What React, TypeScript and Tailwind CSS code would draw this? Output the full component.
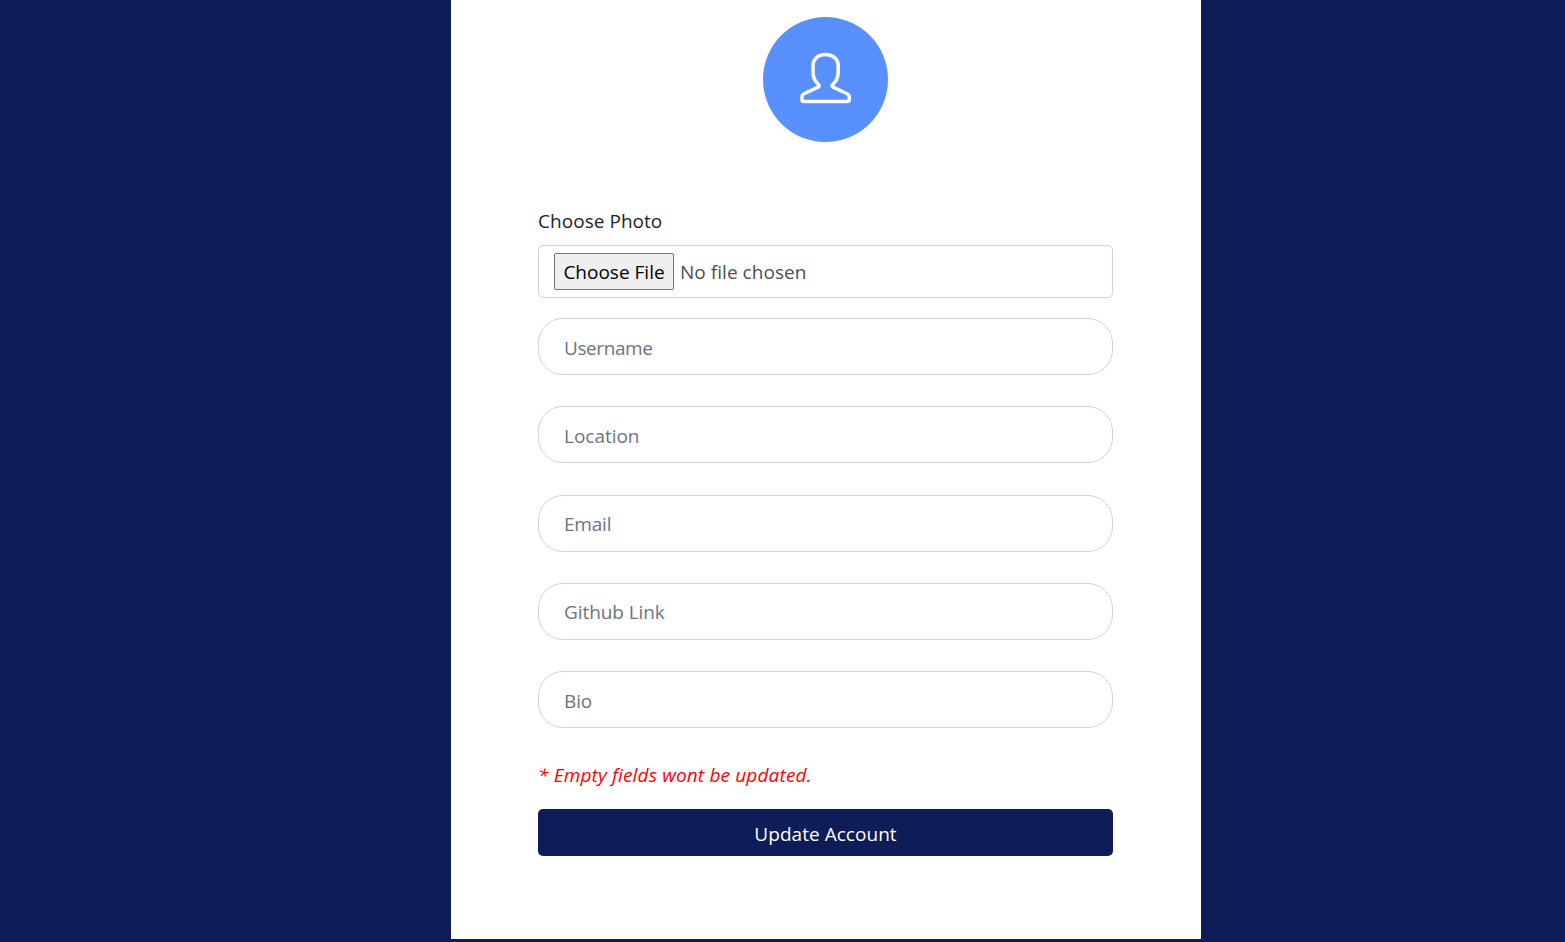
const fields = [
  { name: "Username", style: "mt-5 pt-[2px] placeholder:tracking-[-0.42px]" },
  { name: "Location", style: "mt-[31px] pt-[2px] placeholder:tracking-[-0.02px]" },
  { name: "Email", style: "mt-8 placeholder:tracking-[-0.2px]" },
  { name: "Github Link", style: "mt-[31px] placeholder:tracking-[-0.08px]" },
  { name: "Bio", style: "mt-[31px] pt-[2px] placeholder:tracking-[-0.1px]" },
];

function Avatar() {
  return (
    <svg viewBox="0 0 125 125" className="ml-[225px] block size-[125px]">
      <circle cx="62.5" cy="62.5" r="62.5" fill="#5890ff" />
      <path
        d="M62.5 37.5C54.8 37.5 50 42.5 50 48.5V55C50 61 52.6 65 55.6 67.6Q57 69 55.2 70.2L40.6 77Q39 77.8 39 79.5V82.8Q39 84.5 40.7 84.5H84.5Q86.2 84.5 86.2 82.8V79.5Q86.2 77.8 84.6 77L70 70.2Q68.2 69 69.6 67.6C72.6 65 75.2 61 75.2 55V48.5C75.2 42.5 70.2 37.5 62.5 37.5Z"
        fill="none"
        stroke="#fff"
        strokeWidth="3.5"
        strokeLinejoin="round"
      />
    </svg>
  );
}

export default function App() {
  return (
    <div className="flex h-[942px] bg-[#0e1c57] pl-[451px] font-['Open_Sans','Noto_Sans',sans-serif] text-[19px]">
      <main className="h-[939px] w-[750px] bg-white px-[87px] pt-[17px]">
        <Avatar />
        <form className="mt-[64px] w-[575px]">
          <div className="h-[30px] leading-[30px] tracking-[0.04px] text-[#212529]">Choose Photo</div>
          <div className="mt-[9px] flex h-[53px] items-center rounded-[5px] border border-[#ced4da] pl-[15px]">
            <button type="button" className="h-[37px] w-[120px] rounded-[2px] border border-[#767676] bg-[#efefef] pt-[2px] text-center whitespace-nowrap text-black">
              Choose File
            </button>
            <span className="ml-[6px] pt-[2px] tracking-[0.04px] text-[#495057]">No file chosen</span>
          </div>
          {fields.map((f) => (
            <input
              key={f.name}
              type="text"
              placeholder={f.name}
              className={`${f.style} block h-[57px] w-full rounded-[25px] border border-[#ced4da] bg-white px-[25px] placeholder:text-[#6c757d]`}
            />
          ))}
          <p className="mt-8 h-[30px] leading-[30px] tracking-[0.16px] text-[#ff0000] italic">* Empty fields wont be updated.</p>
          <button type="button" className="mt-[19px] block h-[47px] w-full rounded-[5px] bg-[#0e1c57] pt-[3px] tracking-[0.04px] text-white">
            Update Account
          </button>
        </form>
      </main>
    </div>
  );
}
